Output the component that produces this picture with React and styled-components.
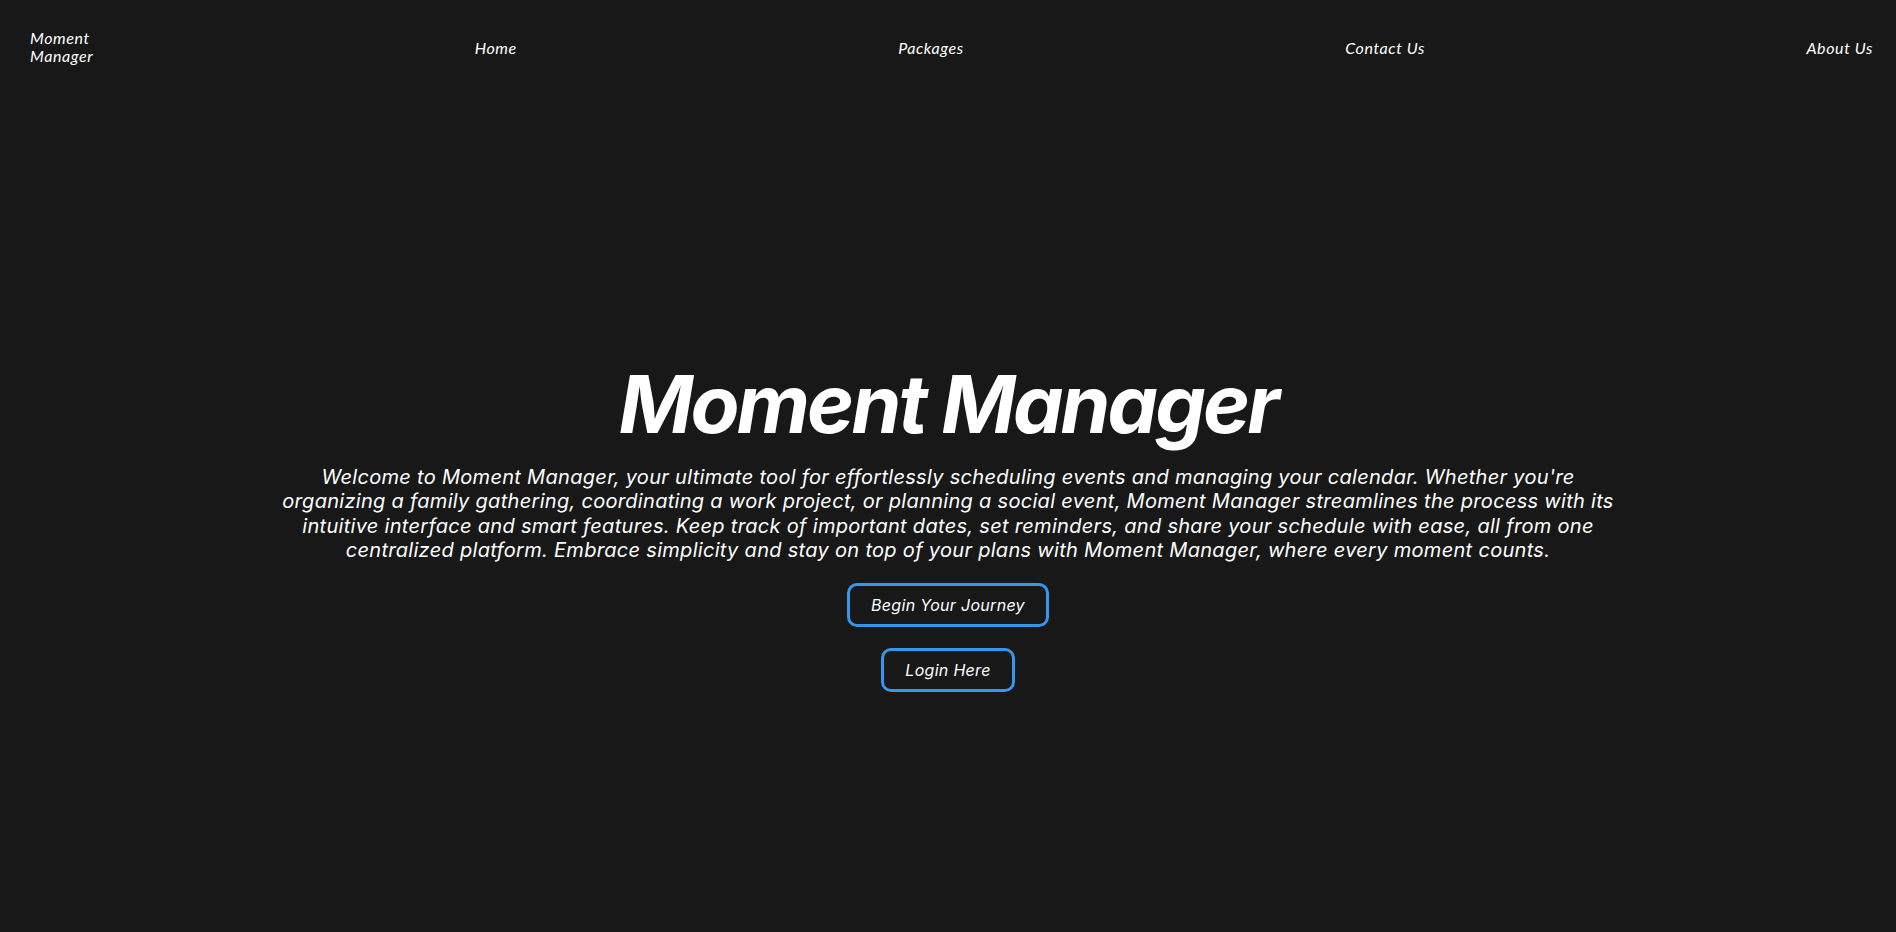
import styled, { createGlobalStyle } from "styled-components";

const GlobalStyle = createGlobalStyle`
  html, body {
    margin: 0;
    padding: 0;
    background: #181818;
    color: #ffffff;
  }
`;

const NAV_LINKS = ["Home", "Packages", "Contact Us", "About Us"];

export default function App() {
  return (
    <>
      <GlobalStyle />
      <Page>
        <Nav>
          <Brand>
            Moment
            <br />
            Manager
          </Brand>
          {NAV_LINKS.map((link) => (
            <NavLink key={link} href="#">
              {link}
            </NavLink>
          ))}
        </Nav>
        <Hero>
          <Title>Moment Manager</Title>
          <Intro>
            Welcome to Moment Manager, your ultimate tool for effortlessly
            scheduling events and managing your calendar. Whether you're
            organizing a family gathering, coordinating a work project, or
            planning a social event, Moment Manager streamlines the process
            with its intuitive interface and smart features. Keep track of
            important dates, set reminders, and share your schedule with ease,
            all from one centralized platform. Embrace simplicity and stay on
            top of your plans with Moment Manager, where every moment counts.
          </Intro>
          <Actions>
            <OutlineButton>Begin Your Journey</OutlineButton>
            <OutlineButton>Login Here</OutlineButton>
          </Actions>
        </Hero>
      </Page>
    </>
  );
}

const Page = styled.div`
  min-height: 932px;
  background: #181818;
`;

const Nav = styled.nav`
  height: 94px;
  display: flex;
  align-items: center;
  justify-content: space-between;
  padding: 0 23px 0 30px;
  font-family: "Lato", "Liberation Sans", sans-serif;
  font-style: italic;
  font-size: 16px;
  letter-spacing: 0.6px;
`;

const Brand = styled.div`
  line-height: 18px;
  color: #ffffff;
`;

const NavLink = styled.a`
  color: #ffffff;
  text-decoration: none;
`;

const Hero = styled.main`
  display: flex;
  flex-direction: column;
  align-items: center;
  padding-top: 262px;
  font-family: "Inter", "Open Sans", sans-serif;
  font-style: italic;
`;

const Title = styled.h1`
  margin: 0;
  font-size: 80px;
  font-weight: 700;
  line-height: 96px;
  letter-spacing: -2.8px;
`;

const Intro = styled.p`
  margin: 13px 0 0;
  width: 1340px;
  font-size: 20px;
  line-height: 24.4px;
  letter-spacing: 0.3px;
  text-align: center;
`;

const Actions = styled.div`
  display: flex;
  flex-direction: column;
  align-items: center;
  gap: 21px;
  margin-top: 20px;
`;

const OutlineButton = styled.button`
  height: 44px;
  padding: 0 21px;
  background: transparent;
  border: 3px solid #3596ea;
  border-radius: 10px;
  color: #ffffff;
  font-family: "Inter", "Open Sans", sans-serif;
  font-style: italic;
  font-size: 16px;
  letter-spacing: 0.3px;
  cursor: pointer;
`;
